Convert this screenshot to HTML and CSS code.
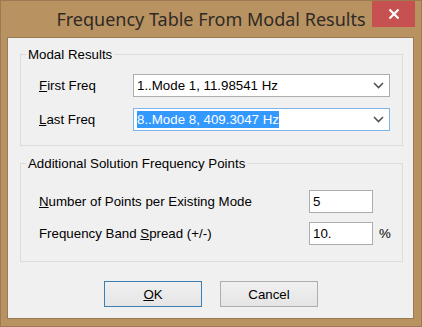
FILE: index.html
```html
<!DOCTYPE html>
<html lang="en">
<head>
    <meta charset="UTF-8">
    <meta name="viewport" content="width=device-width, initial-scale=1.0">
    <title>Frequency Table From Modal Results</title>
    <link rel="stylesheet" href="styles.css">
</head>
<body>
    <div class="window">
        <div class="titlebar">
            <span></span>
            <div class="title">Frequency Table From Modal Results</div>
            <button class="close" type="button" aria-label="Close">
                <svg width="12" height="12" viewBox="0 0 12 12">
                    <path d="M1.5 1.5 L10.5 10.5 M10.5 1.5 L1.5 10.5" stroke="#fff" stroke-width="2.2" fill="none"/>
                </svg>
            </button>
        </div>
        <div class="client">
            <fieldset class="group group-modal">
                <legend>Modal Results</legend>
                <div class="row">
                    <label class="label"><u>F</u>irst Freq</label>
                    <div class="combo">
                        <span class="combo-text">1..Mode 1, 11.98541 Hz</span>
                        <svg class="chevron" width="11" height="7" viewBox="0 0 11 7"><path d="M1 1 L5.5 5.5 L10 1" stroke="#555" stroke-width="1.6" fill="none"/></svg>
                    </div>
                </div>
                <div class="row">
                    <label class="label"><u>L</u>ast Freq</label>
                    <div class="combo focused">
                        <span class="combo-text selected">8..Mode 8, 409.3047 Hz</span>
                        <svg class="chevron" width="11" height="7" viewBox="0 0 11 7"><path d="M1 1 L5.5 5.5 L10 1" stroke="#555" stroke-width="1.6" fill="none"/></svg>
                    </div>
                </div>
            </fieldset>

            <fieldset class="group group-extra">
                <legend>Additional Solution Frequency Points</legend>
                <div class="row">
                    <label class="label wide"><u>N</u>umber of Points per Existing Mode</label>
                    <div class="textbox">5</div>
                </div>
                <div class="row">
                    <label class="label wide">Frequency Band <u>S</u>pread (+/-)</label>
                    <div class="textbox">10.</div>
                    <span class="unit">%</span>
                </div>
            </fieldset>

            <div class="buttons">
                <button class="btn default" type="button"><u>O</u>K</button>
                <button class="btn" type="button">Cancel</button>
            </div>
        </div>
    </div>
</body>
</html>
```

FILE: styles.css
```css
body {
    margin: 0;
    font-family: "Liberation Sans", Arial, sans-serif;
    font-size: 13.3px;
    color: #000;
}

.window {
    width: 422px;
    height: 327px;
    box-sizing: border-box;
    border: 1px solid #9c7b52;
    background-color: #b99262;
    display: flex;
    flex-direction: column;
}

.titlebar {
    height: 36px;
    display: grid;
    grid-template-columns: 1fr auto 1fr;
    align-items: start;
}

.title {
    font-family: "Noto Sans", "Open Sans", sans-serif;
    font-size: 18px;
    color: #2e2a24;
    line-height: 20px;
    padding-top: 8px;
    white-space: nowrap;
}

.close {
    justify-self: end;
    width: 43px;
    height: 26px;
    margin-right: 6px;
    border: none;
    padding: 0;
    background-color: #c75050;
    display: flex;
    align-items: center;
    justify-content: center;
}

.client {
    width: 407px;
    height: 282px;
    box-sizing: border-box;
    margin-left: 6px;
    border: 1px solid #9a7a52;
    background-color: #f0f0f0;
    display: flex;
    flex-direction: column;
}

.group {
    margin: 0 10px 0 12px;
    padding: 0 0 0 18px;
    border: 1px solid #dcdcdc;
    min-width: 0;
}

.group legend {
    margin-left: -13px;
    padding: 0 2px;
    line-height: 15px;
}

.group-modal {
    margin-top: 9px;
    height: 99px;
    box-sizing: border-box;
    padding-top: 12px;
}

.group-modal .row + .row {
    margin-top: 11px;
}

.group-extra {
    margin-top: 10px;
    height: 106px;
    box-sizing: border-box;
    padding-top: 19px;
}

.group-extra .row + .row {
    margin-top: 9px;
}

.row {
    display: flex;
    align-items: center;
}

.label {
    width: 94px;
    flex-shrink: 0;
}

.label.wide {
    width: 270px;
}

.combo {
    width: 257px;
    height: 23px;
    box-sizing: border-box;
    border: 1px solid #abadb3;
    background-color: #fff;
    display: flex;
    align-items: center;
    padding-left: 3px;
}

.combo.focused {
    border-color: #7eb4ea;
}

.combo-text {
    flex: 1;
    line-height: 17px;
}

.combo-text.selected {
    flex: 0 0 auto;
    background-color: #3399ff;
    color: #fff;
    margin-right: auto;
}

.chevron {
    margin: 0 5px 0 0;
}

.combo .selected + .chevron {
    margin-left: auto;
}

.textbox {
    width: 64px;
    height: 23px;
    box-sizing: border-box;
    border: 1px solid #abadb3;
    background-color: #fff;
    padding-left: 3px;
    line-height: 21px;
}

.unit {
    margin-left: 6px;
}

.buttons {
    margin-top: 19px;
    display: flex;
    justify-content: center;
    gap: 18px;
    padding-left: 1px;
}

.btn {
    width: 98px;
    height: 26px;
    font-family: "Liberation Sans", Arial, sans-serif;
    font-size: 13.3px;
    color: #000;
    border: 1px solid #adadad;
    background: linear-gradient(#f0f0f0, #e5e5e5);
    padding: 0;
}

.btn.default {
    border-color: #3c7fb1;
}
```
